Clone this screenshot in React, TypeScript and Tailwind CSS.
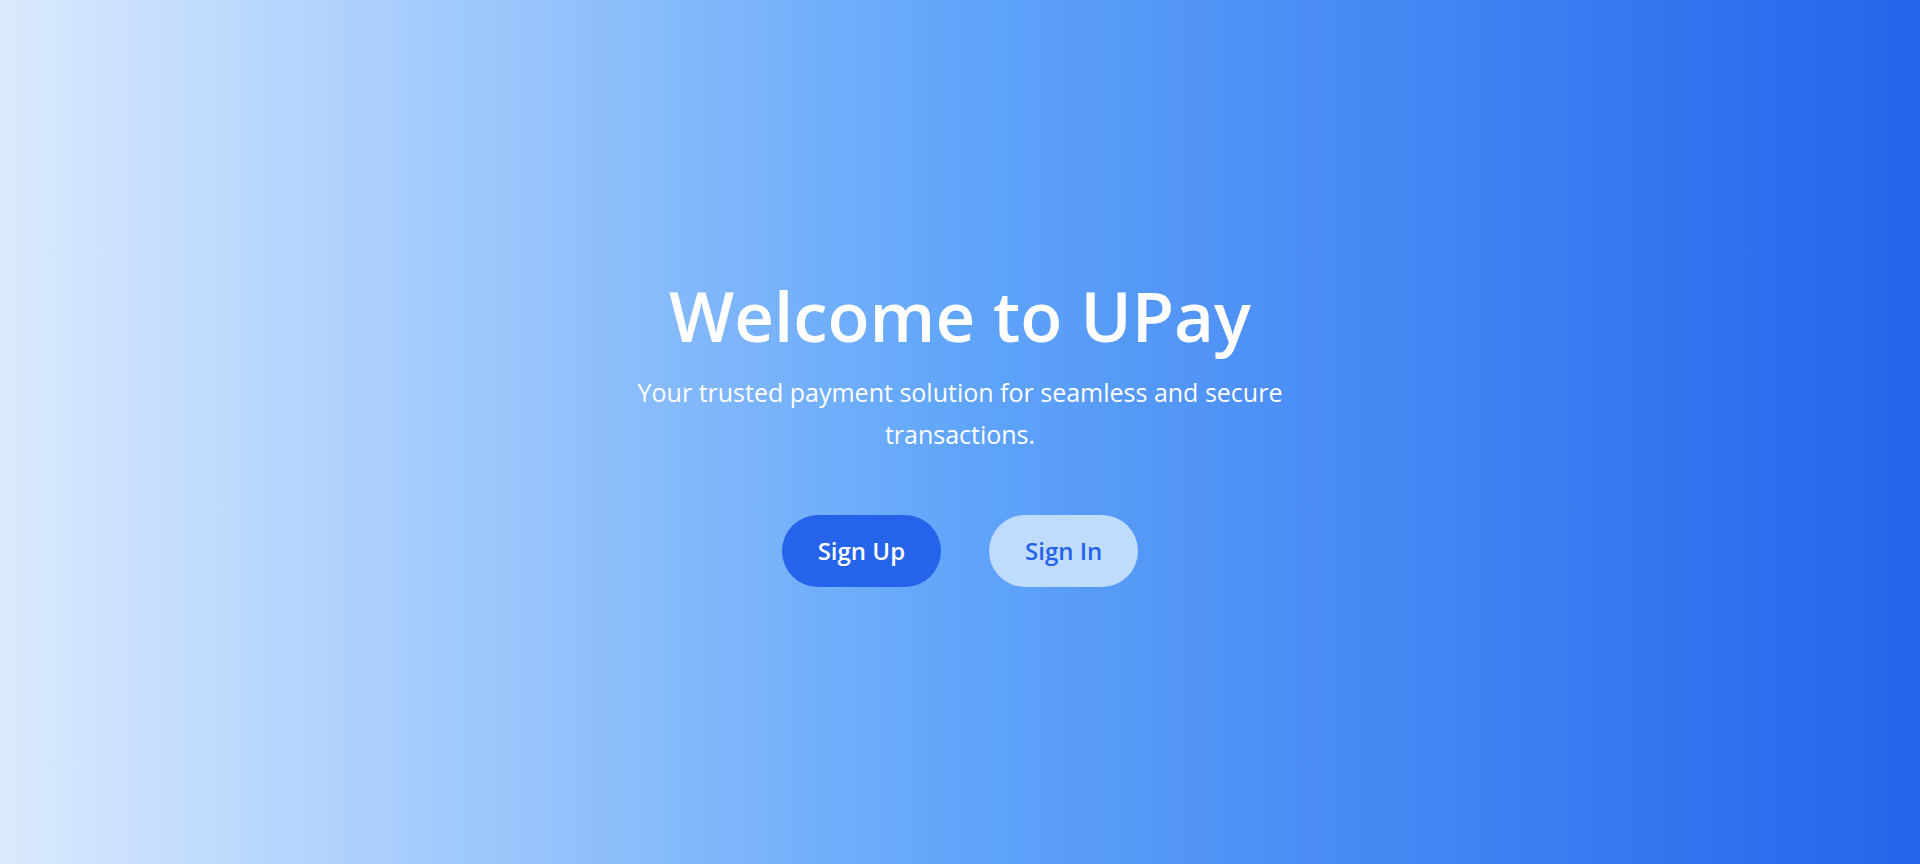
export default function App() {
  return (
    <main className="flex min-h-screen items-center justify-center bg-linear-to-r/srgb from-[#dbeafe] via-[#60a5fa] to-[#2563eb] font-['Open_Sans','Noto_Sans',sans-serif]">
      <section className="max-w-2xl text-center text-white">
        <h1 className="mb-[18px] text-[69px] leading-[76px] font-semibold">Welcome to UPay</h1>
        <p className="mb-15 text-[25px] leading-[42px]">
          Your trusted payment solution for seamless and secure transactions.
        </p>
        <div className="flex justify-center gap-12">
          <button type="button" className="cursor-pointer rounded-full bg-[#2563eb] px-9 py-5 text-2xl font-semibold">
            Sign Up
          </button>
          <button type="button" className="cursor-pointer rounded-full bg-[#bfdbfe] px-9 py-5 text-2xl font-semibold text-[#2563eb]">
            Sign In
          </button>
        </div>
      </section>
    </main>
  );
}
